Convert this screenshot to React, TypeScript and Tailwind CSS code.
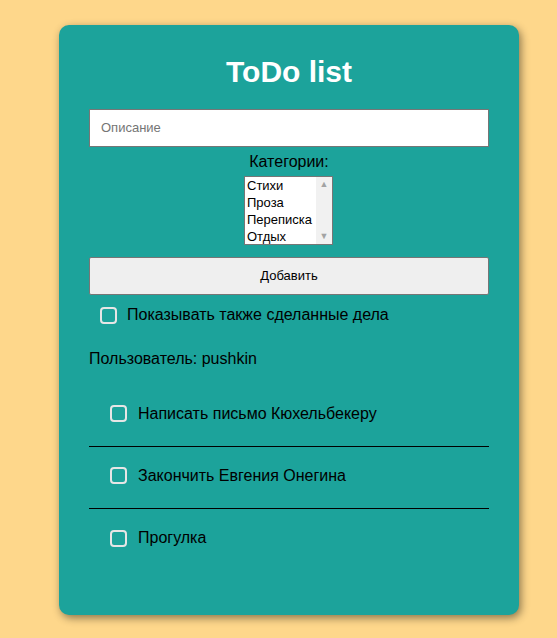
import React from 'react';

const categories = ['Стихи', 'Проза', 'Переписка', 'Отдых'];
const todos = ['Написать письмо Кюхельбекеру', 'Закончить Евгения Онегина', 'Прогулка'];

function Box() {
  return <span className="block w-[17px] h-[17px] shrink-0 rounded-[4px] border-2 border-[#e6e6e6]" />;
}

export default function App() {
  return (
    <div className="min-h-[638px] bg-[#fed78b] pt-[25px] font-['Liberation_Sans',Arial,sans-serif] text-black">
      <div className="ml-[59px] w-[460px] h-[590px] rounded-[10px] bg-[#1ca39b] px-[30px] pt-[29px] shadow-[2px_3px_8px_rgba(0,0,0,0.45)]">
        {/* Header */}
        <h1 className="text-center text-[30px] leading-[36px] font-bold text-white">ToDo list</h1>

        {/* Form */}
        <div className="mt-[19px] flex h-[38px] items-center border border-[#767676] bg-white pl-[11px] text-[13px] text-[#757575]">
          Описание
        </div>
        <div className="mt-[6px] text-center text-[16px] leading-[18px]">Категории:</div>
        <div className="mt-[5px] flex justify-center pr-[1px]">
          <div className="flex h-[69px] w-[89px] border border-[#767676] bg-white">
            <ul className="flex-1 pl-[2px] text-[13px] leading-[17px]">
              {categories.map((c) => (
                <li key={c}>{c}</li>
              ))}
            </ul>
            <div className="flex w-[16px] flex-col items-center justify-between bg-[#f1f1f1] py-[3px] text-[9px] leading-[9px] text-[#a3a3a3]">
              <span>▲</span>
              <span>▼</span>
            </div>
          </div>
        </div>
        <div className="mt-[12px] flex h-[38px] items-center justify-center rounded-[2px] border border-[#767676] bg-[#efefef] text-[13px]">
          Добавить
        </div>

        <label className="mt-[11px] flex h-[18px] items-center gap-[10px] pl-[11px] text-[16px]">
          <Box />
          Показывать также сделанные дела
        </label>

        <div className="mt-[26px] text-[16px] leading-[18px]">Пользователь: pushkin</div>

        {/* List */}
        <ul className="mt-[17px]">
          {todos.map((t, i) => (
            <li
              key={t}
              className={`flex h-[62px] items-center gap-[11px] pb-[4px] pl-[21px] text-[16px] ${
                i < todos.length - 1 ? 'border-b border-black' : ''
              }`}
            >
              <Box />
              {t}
            </li>
          ))}
        </ul>
      </div>
    </div>
  );
}
